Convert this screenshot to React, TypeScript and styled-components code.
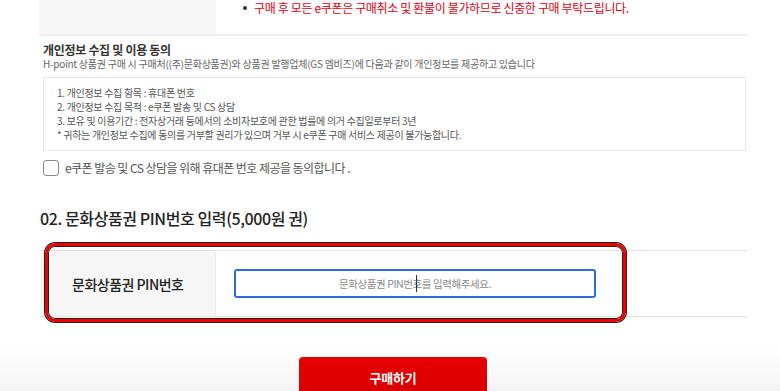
import React from "react";
import styled, { createGlobalStyle } from "styled-components";

const GlobalStyle = createGlobalStyle`
  html, body {
    margin: 0;
    padding: 0;
    background: #fff;
    font-family: "Noto Sans CJK KR", "Noto Sans", sans-serif;
    color: #222;
  }
  * {
    box-sizing: border-box;
  }
`;

const Page = styled("div")`
  width: 780px;
  height: 391px;
  overflow: hidden;
  display: flex;
  flex-direction: column;
`;

const Content = styled("div")`
  margin-left: 39px;
  width: 709px;
`;

const NoticeTable = styled("div")`
  display: flex;
  height: 36px;
  border-bottom: 2px solid #efefef;
`;

const NoticeHead = styled("div")`
  width: 177px;
  background: #f7f7f7;
`;

const NoticeBody = styled("ul")`
  flex: 1;
  margin: 0;
  padding: 0 0 0 27px;
  list-style: none;
  li {
    position: relative;
    padding-left: 11px;
    font-size: 12px;
    line-height: 15px;
    color: #e60012;
    letter-spacing: -0.35px;
  }
  li::before {
    content: "";
    position: absolute;
    left: 0;
    top: 6px;
    width: 4px;
    height: 4px;
    border-radius: 50%;
    background: #333;
  }
`;

const AgreeSection = styled("div")`
  padding: 7px 0 0 4px;
`;

const AgreeTitle = styled("div")`
  font-size: 12px;
  line-height: 14px;
  font-weight: 700;
  color: #333;
  letter-spacing: -0.3px;
`;

const AgreeDesc = styled("div")`
  font-size: 10px;
  line-height: 13px;
  color: #666;
  letter-spacing: -0.25px;
`;

const TermsBox = styled("div")`
  margin-top: 7px;
  width: 703px;
  height: 74px;
  border: 1px solid #e6e6e6;
  padding: 8px 0 0 13px;
  p {
    margin: 0;
    font-size: 10px;
    line-height: 14px;
    color: #555;
    letter-spacing: -0.3px;
  }
`;

const CheckRow = styled("label")`
  display: flex;
  align-items: center;
  gap: 6px;
  margin-top: 8px;
  font-size: 12px;
  color: #555;
  letter-spacing: -0.55px;
`;

const CheckBox = styled("span")`
  width: 16px;
  height: 16px;
  border: 1px solid #888;
  border-radius: 3px;
  background: #fff;
`;

const SectionTitle = styled("h2")`
  margin: 31px 0 0 1px;
  font-size: 16px;
  line-height: 22px;
  font-weight: 500;
  color: #222;
  letter-spacing: -0.4px;
`;

const PinTable = styled("div")`
  position: relative;
  margin-top: 21px;
  margin-left: 1px;
  display: flex;
  height: 67px;
  border-top: 1px solid #e2e2e2;
  border-bottom: 1px solid #e2e2e2;
`;

const PinHead = styled("div")`
  width: 176px;
  background: #f6f6f6;
  border-right: 1px solid #ececec;
  display: flex;
  align-items: center;
  padding-left: 32px;
  font-size: 14px;
  font-weight: 500;
  color: #222;
  letter-spacing: -0.5px;
`;

const PinCell = styled("div")`
  flex: 1;
  display: flex;
  align-items: center;
  padding-left: 18px;
`;

const InputWrap = styled("div")`
  position: relative;
  width: 362px;
  height: 29px;
`;

const PinInput = styled("input")`
  width: 100%;
  height: 100%;
  border: 2px solid #2b6fd8;
  border-radius: 3px;
  outline: none;
  text-align: center;
  font-family: inherit;
  font-size: 10.5px;
  letter-spacing: -0.4px;
  &::placeholder {
    color: #8a8a8a;
  }
`;

const Caret = styled("span")`
  position: absolute;
  left: 182px;
  top: 6px;
  width: 1px;
  height: 17px;
  background: #333;
`;

const Highlight = styled("div")`
  position: absolute;
  left: 5px;
  top: -8px;
  width: 581px;
  height: 79px;
  border: 3px solid #ee0000;
  border-radius: 10px;
  box-shadow: 0 0 0 1px #222, inset 0 0 0 1px #222;
  pointer-events: none;
`;

const Footer = styled("div")`
  margin-top: 30px;
  flex: 1;
  display: flex;
  justify-content: center;
  padding: 10px 0 0 6px;
  background: linear-gradient(to bottom, #ffffff 0%, #f8f8f8 50%, #ececec 100%);
`;

const BuyButton = styled("button")`
  width: 188px;
  height: 48px;
  border: none;
  border-radius: 4px 4px 0 0;
  background: linear-gradient(to bottom, #e60000, #d60000);
  color: #fff;
  font-family: inherit;
  font-size: 13px;
  font-weight: 700;
  padding: 0 0 8px;
  letter-spacing: -0.2px;
`;

export default function App() {
  return (
    <>
      <GlobalStyle />
      <Page>
        <Content>
          <NoticeTable>
            <NoticeHead />
            <NoticeBody>
              <li>구매 후 모든 e쿠폰은 구매취소 및 환불이 불가하므로 신중한 구매 부탁드립니다.</li>
            </NoticeBody>
          </NoticeTable>

          <AgreeSection>
            <AgreeTitle>개인정보 수집 및 이용 동의</AgreeTitle>
            <AgreeDesc>
              H-point 상품권 구매 시 구매처((주)문화상품권)와 상품권 발행업체(GS 엠비즈)에 다음과 같이 개인정보를 제공하고 있습니다
            </AgreeDesc>
            <TermsBox>
              <p>1. 개인정보 수집 항목 : 휴대폰 번호</p>
              <p>2. 개인정보 수집 목적 : e쿠폰 발송 및 CS 상담</p>
              <p>3. 보유 및 이용기간 : 전자상거래 등에서의 소비자보호에 관한 법률에 의거 수집일로부터 3년</p>
              <p>* 귀하는 개인정보 수집에 동의를 거부할 권리가 있으며 거부 시 e쿠폰 구매 서비스 제공이 불가능합니다.</p>
            </TermsBox>
            <CheckRow>
              <CheckBox />
              e쿠폰 발송 및 CS 상담을 위해 휴대폰 번호 제공을 동의합니다 .
            </CheckRow>
          </AgreeSection>

          <SectionTitle>02. 문화상품권 PIN번호 입력(5,000원 권)</SectionTitle>

          <PinTable>
            <PinHead>문화상품권 PIN번호</PinHead>
            <PinCell>
              <InputWrap>
                <PinInput placeholder="문화상품권 PIN번호를 입력해주세요." />
                <Caret />
              </InputWrap>
            </PinCell>
            <Highlight />
          </PinTable>
        </Content>

        <Footer>
          <BuyButton>구매하기</BuyButton>
        </Footer>
      </Page>
    </>
  );
}
